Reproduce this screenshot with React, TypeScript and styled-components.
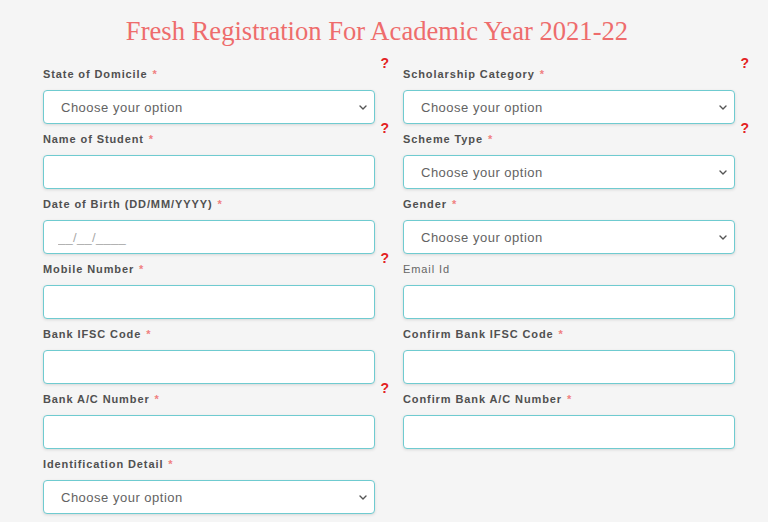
import React from "react";
import styled, { createGlobalStyle } from "styled-components";

const Global = createGlobalStyle`
  html, body { margin: 0; padding: 0; background: #f5f5f5; }
  body { font-family: "Liberation Sans", Arial, sans-serif; }
  * { box-sizing: border-box; }
`;

const Page = styled.div`
  width: 768px;
  height: 522px;
  overflow: hidden;
  background: #f5f5f5;
  padding: 16px 33px 0 43px;
`;

const Title = styled.h1`
  margin: 0 0 20px 0;
  font-family: "Liberation Serif", "Times New Roman", serif;
  font-weight: 400;
  font-size: 26.6px;
  line-height: 30px;
  color: #ee6c6c;
  text-align: center;
  padding-right: 24px;
`;

const Grid = styled.div`
  display: grid;
  grid-template-columns: 332px 332px;
  column-gap: 28px;
  row-gap: 7px;
`;

const Field = styled.div`
  position: relative;
  display: flex;
  flex-direction: column;
`;

const Label = styled.label<{ $plain?: boolean }>`
  font-size: 11px;
  line-height: 16px;
  height: 16px;
  margin-bottom: 8px;
  font-weight: ${(p) => (p.$plain ? 400 : 700)};
  color: ${(p) => (p.$plain ? "#666" : "#505050")};
  letter-spacing: 0.9px;
  white-space: nowrap;
`;

const Star = styled.span`
  color: #f08080;
  margin-left: 1px;
`;

const Help = styled.span`
  position: absolute;
  top: -11px;
  right: -14px;
  color: #e32222;
  font-weight: 700;
  font-size: 14px;
  line-height: 16px;
  font-family: "Liberation Sans", Arial, sans-serif;
`;

const Box = styled.div`
  position: relative;
  height: 34px;
  background: #fff;
  border: 1px solid #6fcbd0;
  border-radius: 4px;
  box-shadow: 0 1px 3px rgba(0, 0, 0, 0.12);
`;

const Input = styled.input`
  width: 100%;
  height: 100%;
  border: 0;
  outline: none;
  background: transparent;
  padding: 0 14px;
  font-family: "Liberation Sans", Arial, sans-serif;
  font-size: 13px;
  letter-spacing: 0.6px;
  color: #555;
  &::placeholder { color: #a8a8a8; letter-spacing: 0.3px; }
`;

const Select = styled.select`
  width: 100%;
  height: 100%;
  border: 0;
  outline: none;
  background: transparent;
  appearance: none;
  -webkit-appearance: none;
  padding: 0 30px 0 17px;
  font-family: "Liberation Sans", Arial, sans-serif;
  font-size: 13px;
  letter-spacing: 0.5px;
  color: #636363;
`;

const Chevron = styled.svg`
  position: absolute;
  right: 7px;
  top: 14px;
  width: 8px;
  height: 5px;
  pointer-events: none;
`;

type FieldDef = {
  label: string;
  req?: boolean;
  kind: "select" | "input" | "date";
  help?: boolean;
  plain?: boolean;
};

const fields: FieldDef[] = [
  { label: "State of Domicile", req: true, kind: "select", help: true },
  { label: "Scholarship Category", req: true, kind: "select", help: true },
  { label: "Name of Student", req: true, kind: "input", help: true },
  { label: "Scheme Type", req: true, kind: "select", help: true },
  { label: "Date of Birth (DD/MM/YYYY)", req: true, kind: "date" },
  { label: "Gender", req: true, kind: "select" },
  { label: "Mobile Number", req: true, kind: "input", help: true },
  { label: "Email Id", kind: "input", plain: true },
  { label: "Bank IFSC Code", req: true, kind: "input" },
  { label: "Confirm Bank IFSC Code", req: true, kind: "input" },
  { label: "Bank A/C Number", req: true, kind: "input", help: true },
  { label: "Confirm Bank A/C Number", req: true, kind: "input" },
  { label: "Identification Detail", req: true, kind: "select" },
];

function Control({ kind }: { kind: FieldDef["kind"] }) {
  if (kind === "select") {
    return (
      <Box>
        <Select defaultValue="">
          <option value="">Choose your option</option>
        </Select>
        <Chevron viewBox="0 0 8 5">
          <path d="M1 1 L4 4 L7 1" fill="none" stroke="#555" strokeWidth="1.4" strokeLinecap="round" strokeLinejoin="round" />
        </Chevron>
      </Box>
    );
  }
  return (
    <Box>
      <Input placeholder={kind === "date" ? "__/__/____" : ""} />
    </Box>
  );
}

export default function App() {
  return (
    <>
      <Global />
      <Page>
        <Title>Fresh Registration For Academic Year 2021-22</Title>
        <Grid>
          {fields.map((f) => (
            <Field key={f.label}>
              {f.help && <Help>?</Help>}
              <Label $plain={f.plain}>
                {f.label}
                {f.req && <Star> *</Star>}
              </Label>
              <Control kind={f.kind} />
            </Field>
          ))}
        </Grid>
      </Page>
    </>
  );
}
